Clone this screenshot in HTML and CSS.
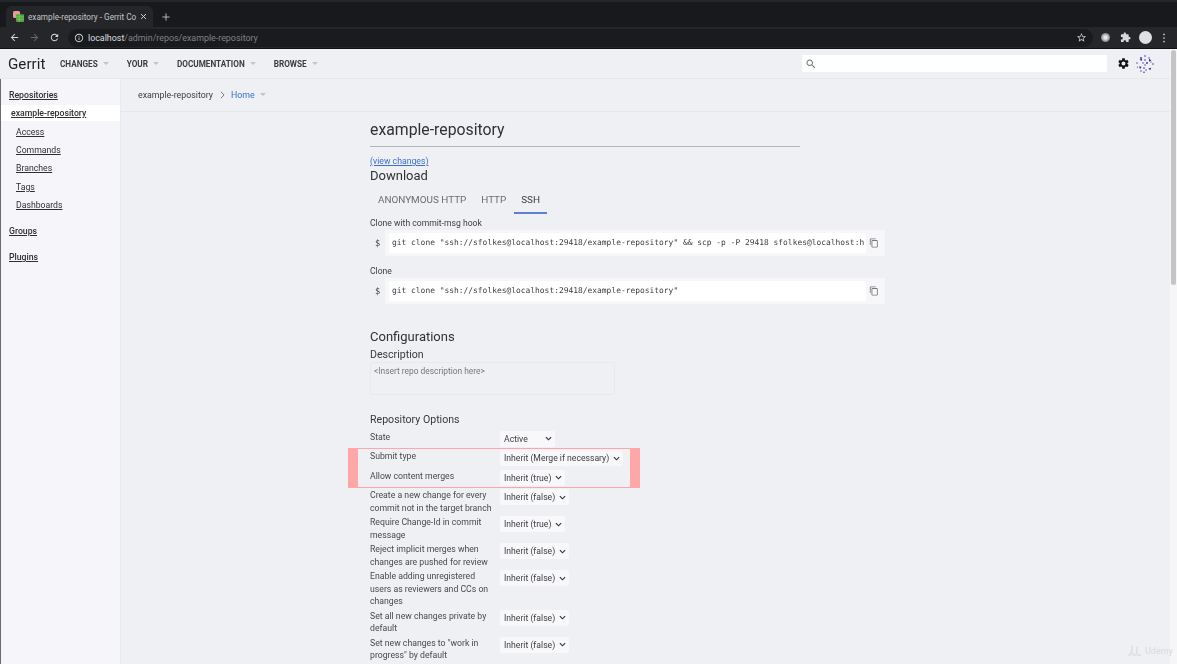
FILE: index.html
```html
<!DOCTYPE html>
<html lang="en">
<head>
  <meta charset="UTF-8">
  <title>example-repository - Gerrit Code Review</title>
  <link rel="stylesheet" href="styles.css">
</head>
<body>

  <div class="tabbar">
    <div class="tab">
      <svg class="favicon" viewBox="0 0 14 14"><rect x="0" y="0" width="9" height="9" rx="2" fill="#e89a9a"/><rect x="4" y="4" width="10" height="10" rx="1" fill="#4fa638"/><path d="M4 7.5h10M4 10.5h10M8 4v10" stroke="#94cf78" stroke-width=".7"/></svg>
      <span class="tab-title">example-repository - Gerrit Co</span>
      <svg class="tab-close" viewBox="0 0 10 10"><path d="M1.5 1.5l7 7M8.5 1.5l-7 7" stroke="#d5d6d8" stroke-width="1.4"/></svg>
    </div>
    <svg class="tab-new" viewBox="0 0 10 10"><path d="M5 .5v9M.5 5h9" stroke="#b9babc" stroke-width="1.2"/></svg>
  </div>

  <div class="toolbar">
    <svg class="tool-icon" viewBox="0 0 24 24"><path fill="#d7d8da" d="M20 11H7.83l5.59-5.59L12 4l-8 8 8 8 1.41-1.41L7.83 13H20v-2z"/></svg>
    <svg class="tool-icon" viewBox="0 0 24 24"><path fill="#68696c" d="M12 4l-1.41 1.41L16.17 11H4v2h12.17l-5.58 5.59L12 20l8-8z"/></svg>
    <svg class="tool-icon" viewBox="0 0 24 24"><path fill="#d7d8da" d="M17.65 6.35C16.2 4.9 14.21 4 12 4c-4.42 0-7.99 3.58-7.99 8s3.57 8 7.99 8c3.73 0 6.84-2.55 7.73-6h-2.08c-.82 2.33-3.04 4-5.65 4-3.31 0-6-2.69-6-6s2.69-6 6-6c1.66 0 3.14.69 4.22 1.78L13 11h7V4l-2.35 2.35z"/></svg>
    <div class="omnibox">
      <svg class="omni-info" viewBox="0 0 24 24"><path fill="#d7d8da" d="M11 7h2v2h-2zm0 4h2v6h-2zm1-9C6.48 2 2 6.48 2 12s4.48 10 10 10 10-4.48 10-10S17.52 2 12 2zm0 18c-4.41 0-8-3.59-8-8s3.59-8 8-8 8 3.59 8 8-3.59 8-8 8z"/></svg>
      <span class="omni-host">localhost</span><span class="omni-path">/admin/repos/example-repository</span>
      <svg class="omni-star" viewBox="0 0 24 24"><path fill="#c9cacc" d="M22 9.24l-7.19-.62L12 2 9.19 8.63 2 9.24l5.46 4.73L5.82 21 12 17.27 18.18 21l-1.63-7.03L22 9.24zM12 15.4l-3.76 2.27 1-4.28-3.32-2.88 4.38-.38L12 6.1l1.71 4.04 4.38.38-3.32 2.88 1 4.28L12 15.4z"/></svg>
    </div>
    <div class="tool-right">
      <span class="ext-dot"></span>
      <svg class="ext-icon" viewBox="0 0 24 24"><path fill="#d7d8da" d="M20.5 11H19V7c0-1.1-.9-2-2-2h-4V3.5C13 2.12 11.88 1 10.5 1S8 2.12 8 3.5V5H4c-1.1 0-1.99.9-1.99 2v3.8H3.5c1.49 0 2.7 1.21 2.7 2.7s-1.21 2.7-2.7 2.7H2V20c0 1.1.9 2 2 2h3.8v-1.5c0-1.49 1.21-2.7 2.7-2.7 1.49 0 2.7 1.21 2.7 2.7V22H17c1.1 0 2-.9 2-2v-4h1.5c1.38 0 2.5-1.12 2.5-2.5S21.88 11 20.5 11z"/></svg>
      <span class="profile"></span>
      <svg class="kebab" viewBox="0 0 4 14"><circle cx="2" cy="2" r="1.2" fill="#c9cacc"/><circle cx="2" cy="7" r="1.2" fill="#c9cacc"/><circle cx="2" cy="12" r="1.2" fill="#c9cacc"/></svg>
    </div>
  </div>

  <div class="window">
    <div class="app">
      <header class="header">
        <span class="logo">Gerrit</span>
        <nav class="nav">
          <a class="nav-item">CHANGES<i class="caret"></i></a>
          <a class="nav-item">YOUR<i class="caret"></i></a>
          <a class="nav-item">DOCUMENTATION<i class="caret"></i></a>
          <a class="nav-item">BROWSE<i class="caret"></i></a>
        </nav>
        <div class="search">
          <svg class="search-icon" viewBox="0 0 24 24"><path fill="#6f7073" d="M15.5 14h-.79l-.28-.27C15.41 12.59 16 11.11 16 9.5 16 5.91 13.09 3 9.5 3S3 5.91 3 9.5 5.91 16 9.5 16c1.61 0 3.09-.59 4.23-1.57l.27.28v.79l5 4.99L20.49 19l-4.99-5zm-6 0C7.01 14 5 11.99 5 9.5S7.01 5 9.5 5 14 7.01 14 9.5 11.99 14 9.5 14z"/></svg>
        </div>
        <svg class="gear" viewBox="0 0 24 24"><path fill="#111" d="M19.14 12.94c.04-.3.06-.61.06-.94 0-.32-.02-.64-.07-.94l2.03-1.58c.18-.14.23-.41.12-.61l-1.92-3.32c-.12-.22-.37-.29-.59-.22l-2.39.96c-.5-.38-1.03-.7-1.62-.94l-.36-2.54c-.04-.24-.24-.41-.48-.41h-3.84c-.24 0-.43.17-.47.41l-.36 2.54c-.59.24-1.13.57-1.62.94l-2.39-.96c-.22-.08-.47 0-.59.22L2.74 8.87c-.12.21-.08.47.12.61l2.03 1.58c-.05.3-.09.63-.09.94s.02.64.07.94l-2.03 1.58c-.18.14-.23.41-.12.61l1.92 3.32c.12.22.37.29.59.22l2.39-.96c.5.38 1.03.7 1.62.94l.36 2.54c.05.24.24.41.48.41h3.84c.24 0 .44-.17.47-.41l.36-2.54c.59-.24 1.13-.56 1.62-.94l2.39.96c.22.08.47 0 .59-.22l1.92-3.32c.12-.22.07-.47-.12-.61l-2.01-1.58zM12 15.6c-1.98 0-3.6-1.62-3.6-3.6s1.62-3.6 3.6-3.6 3.6 1.62 3.6 3.6-1.62 3.6-3.6 3.6z"/></svg>
        <svg class="user-logo" viewBox="0 0 18 18" fill="#3d2aa8">
          <circle cx="9" cy="1" r=".8"/><circle cx="5" cy="3" r=".9"/><circle cx="13" cy="3" r=".7"/><path d="M3.5 4.5l2.8-.8-.6 2.4zM13 3.8l2.4 1.6-2.4 1.4z"/><circle cx="9" cy="5" r=".8"/><circle cx="1" cy="8" r=".7"/><circle cx="7" cy="8" r=".7"/><circle cx="11" cy="8" r=".9"/><circle cx="17" cy="9" r=".8"/><circle cx="9" cy="10" r=".7"/><path d="M3 11.5l2.8.3-1.8 2.3zM12.3 13.6l2.9-.9-.9 2.5z"/><circle cx="1.5" cy="12" r=".6"/><circle cx="8" cy="13" r=".8"/><circle cx="10" cy="15" r=".7"/><circle cx="5" cy="16" r=".7"/><circle cx="8" cy="17.2" r=".8"/><circle cx="15" cy="7" r=".6"/>
        </svg>
      </header>

      <div class="body-row">
        <aside class="sidebar">
          <a class="side-head first">Repositories</a>
          <a class="side-active">example-repository</a>
          <a class="side-sub">Access</a>
          <a class="side-sub">Commands</a>
          <a class="side-sub">Branches</a>
          <a class="side-sub">Tags</a>
          <a class="side-sub">Dashboards</a>
          <a class="side-head group">Groups</a>
          <a class="side-head group">Plugins</a>
        </aside>

        <main class="main">
          <div class="crumbs">
            <span>example-repository</span>
            <svg class="crumb-arrow" viewBox="0 0 6 10"><path d="M1 1l4 4-4 4" fill="none" stroke="#66676a" stroke-width="1.1"/></svg>
            <a class="crumb-link">Home</a><i class="caret"></i>
          </div>

          <section class="content">
            <h1 class="repo-title">example-repository</h1>
            <a class="view-changes">(view changes)</a>
            <h2 class="section-title download">Download</h2>

            <div class="tabs">
              <span class="dl-tab">ANONYMOUS HTTP</span>
              <span class="dl-tab">HTTP</span>
              <span class="dl-tab selected">SSH</span>
            </div>

            <div class="cmd-label">Clone with commit-msg hook</div>
            <div class="cmd">
              <span class="dollar">$</span>
              <div class="cmd-box">
                <div class="cmd-text">git clone "ssh://sfolkes@localhost:29418/example-repository" &amp;&amp; scp -p -P 29418 sfolkes@localhost:h</div>
                <svg class="copy" viewBox="0 0 24 24"><path fill="#77787b" d="M16 1H4c-1.1 0-2 .9-2 2v14h2V3h12V1zm3 4H8c-1.1 0-2 .9-2 2v14c0 1.1.9 2 2 2h11c1.1 0 2-.9 2-2V7c0-1.1-.9-2-2-2zm0 16H8V7h11v14z"/></svg>
              </div>
            </div>

            <div class="cmd-label second">Clone</div>
            <div class="cmd">
              <span class="dollar">$</span>
              <div class="cmd-box">
                <div class="cmd-text">git clone "ssh://sfolkes@localhost:29418/example-repository"</div>
                <svg class="copy" viewBox="0 0 24 24"><path fill="#77787b" d="M16 1H4c-1.1 0-2 .9-2 2v14h2V3h12V1zm3 4H8c-1.1 0-2 .9-2 2v14c0 1.1.9 2 2 2h11c1.1 0 2-.9 2-2V7c0-1.1-.9-2-2-2zm0 16H8V7h11v14z"/></svg>
              </div>
            </div>

            <h2 class="section-title configurations">Configurations</h2>
            <h3 class="sub-title">Description</h3>
            <div class="description">&lt;Insert repo description here&gt;</div>

            <h3 class="sub-title options">Repository Options</h3>

            <div class="opt">
              <label class="opt-label">State</label>
              <select class="opt-select wide-active"><option>Active</option></select>
            </div>
            <div class="highlight">
              <div class="opt">
                <label class="opt-label">Submit type</label>
                <select class="opt-select"><option>Inherit (Merge if necessary)</option></select>
              </div>
              <div class="opt">
                <label class="opt-label">Allow content merges</label>
                <select class="opt-select"><option>Inherit (true)</option></select>
              </div>
            </div>
            <div class="opt">
              <label class="opt-label">Create a new change for every commit not in the target branch</label>
              <select class="opt-select"><option>Inherit (false)</option></select>
            </div>
            <div class="opt">
              <label class="opt-label">Require Change-Id in commit message</label>
              <select class="opt-select"><option>Inherit (true)</option></select>
            </div>
            <div class="opt">
              <label class="opt-label">Reject implicit merges when changes are pushed for review</label>
              <select class="opt-select"><option>Inherit (false)</option></select>
            </div>
            <div class="opt">
              <label class="opt-label">Enable adding unregistered users as reviewers and CCs on changes</label>
              <select class="opt-select"><option>Inherit (false)</option></select>
            </div>
            <div class="opt">
              <label class="opt-label">Set all new changes private by default</label>
              <select class="opt-select"><option>Inherit (false)</option></select>
            </div>
            <div class="opt">
              <label class="opt-label">Set new changes to "work in progress" by default</label>
              <select class="opt-select"><option>Inherit (false)</option></select>
            </div>
          </section>
        </main>
      </div>
    </div>

    <div class="scrollbar"><div class="scroll-thumb"></div></div>
    <div class="watermark">
      <svg class="wm-logo" viewBox="0 0 20 16"><path d="M2 15c3-1 5-5 5-13M7 11c0 3 3 4 5 2M13 4v7c0 3 3 4 5 3" fill="none" stroke="#dfe0e4" stroke-width="2.4" stroke-linecap="round"/></svg>
      <span>Udemy</span>
    </div>
  </div>

</body>
</html>
```

FILE: styles.css
```css
html, body {
  height: 100%;
}

body {
  margin: 0;
  overflow: hidden;
  display: flex;
  flex-direction: column;
  font-family: Roboto, "Liberation Sans", sans-serif;
  font-size: 9.6px;
  color: #3c3d40;
  background-color: #eff0f4;
  filter: blur(0.5px);
}

/* browser chrome */

.tabbar {
  height: 27px;
  flex: none;
  display: flex;
  align-items: flex-end;
  background-color: #18191c;
  border-top: 2px solid #23272c;
  box-sizing: border-box;
  padding-left: 6px;
}

.tab {
  width: 147px;
  height: 21px;
  display: flex;
  align-items: center;
  padding: 0 6px 0 7px;
  box-sizing: border-box;
  background-color: #25262a;
  border-radius: 6px 6px 0 0;
}

.favicon {
  width: 11px;
  height: 11px;
  margin-right: 4px;
}

.tab-title {
  flex: 1;
  overflow: hidden;
  white-space: nowrap;
  font-size: 8.2px;
  color: #c4c5c7;
}

.tab-close {
  width: 7px;
  height: 7px;
  margin-left: 3px;
}

.tab-new {
  width: 8px;
  height: 8px;
  margin: 0 0 6px 9px;
}

.toolbar {
  height: 22px;
  flex: none;
  display: flex;
  align-items: center;
  padding-left: 9px;
  box-sizing: border-box;
  background-color: #25262a;
  border-bottom: 1px solid #101114;
}

.tool-icon {
  width: 11px;
  height: 11px;
  margin-right: 9px;
}

.omnibox {
  width: 1025px;
  height: 18px;
  margin-left: -1px;
  display: flex;
  align-items: center;
  padding: 0 6px;
  box-sizing: border-box;
  border-radius: 9px;
  background-color: #1a1b1e;
  font-size: 8.9px;
}

.omni-info {
  width: 10px;
  height: 10px;
  margin-right: 4px;
}

.omni-host {
  color: #dcdde0;
}

.omni-path {
  color: #808185;
}

.omni-star {
  width: 11px;
  height: 11px;
  margin-left: auto;
}

.tool-right {
  flex: 1;
  display: flex;
  align-items: center;
  padding-left: 8px;
}

.ext-dot {
  width: 9px;
  height: 9px;
  border-radius: 50%;
  background: radial-gradient(circle, #e8e8e8 20%, #77787b 75%);
}

.ext-icon {
  width: 11px;
  height: 11px;
  margin-left: 10px;
}

.profile {
  width: 13px;
  height: 13px;
  margin-left: 8px;
  border-radius: 50%;
  background-color: #dfe0e2;
}

.kebab {
  width: 4px;
  height: 10px;
  margin-left: 10px;
}

/* gerrit app */

.window {
  flex: 1;
  min-height: 0;
  display: flex;
  position: relative;
}

.app {
  flex: 1;
  min-width: 0;
  display: flex;
  flex-direction: column;
}

.header {
  height: 29px;
  flex: none;
  display: flex;
  align-items: center;
  padding-left: 8px;
  border-bottom: 1px solid #e6e7eb;
}

.logo {
  width: 52px;
  font-size: 15.2px;
  color: #1f2023;
}

.nav {
  display: flex;
  flex: 1;
}

.nav-item {
  display: flex;
  align-items: center;
  margin-right: 18px;
  font-size: 8.2px;
  font-weight: 700;
  color: #3a3b3e;
}

.caret {
  width: 0;
  height: 0;
  margin-left: 5px;
  border-left: 3px solid transparent;
  border-right: 3px solid transparent;
  border-top: 3px solid #c2c3c6;
}

.search {
  width: 305px;
  height: 17px;
  display: flex;
  align-items: center;
  padding-left: 3px;
  box-sizing: border-box;
  border-radius: 1px;
  background-color: #fff;
}

.search-icon {
  width: 12px;
  height: 12px;
}

.gear {
  width: 13px;
  height: 13px;
  margin-left: 9.5px;
}

.user-logo {
  width: 18px;
  height: 18px;
  margin: 0 16px 0 6.5px;
}

.body-row {
  flex: 1;
  min-height: 0;
  display: flex;
}

.sidebar {
  width: 121px;
  flex: none;
  padding-top: 10px;
  box-sizing: border-box;
  background-color: #f6f6fa;
  border-left: 1px solid #6a6b6f;
  border-right: 1px solid #e9eaee;
}

.sidebar a {
  display: block;
  color: #2e2f32;
  text-decoration: underline;
  line-height: 18.4px;
  font-size: 8.7px;
}

.side-head {
  padding-left: 8px;
  font-weight: 500;
}

.side-head.first {
  line-height: 13px !important;
  margin-bottom: 3px;
}

.side-head.group {
  margin-top: 7.6px;
}

.side-active {
  padding-left: 10px;
  font-weight: 500;
  line-height: 16px !important;
  margin-bottom: 1.5px;
  background-color: #fff;
}

.side-sub {
  padding-left: 15px;
}

.main {
  flex: 1;
  min-width: 0;
}

.crumbs {
  height: 33px;
  display: flex;
  align-items: center;
  padding: 0 0 1px 17px;
  box-sizing: border-box;
  border-bottom: 1px solid #e6e7eb;
  font-size: 8.8px;
}

.crumb-arrow {
  width: 5px;
  height: 8px;
  margin: 0 6px 0 7px;
}

.crumb-link {
  color: #3b6fc9;
}

.content {
  padding: 8px 0 0 249px;
}

.repo-title {
  width: 430px;
  margin: 0;
  padding-bottom: 7px;
  font-size: 15.8px;
  font-weight: 400;
  line-height: 19px;
  color: #303134;
  border-bottom: 1px solid #b4b5b8;
}

.view-changes {
  display: block;
  margin-top: 9px;
  font-size: 8.7px;
  line-height: 10px;
  color: #3b6fc9;
  text-decoration: underline;
}

.section-title {
  margin: 0;
  font-size: 13px;
  font-weight: 400;
  line-height: 16px;
  color: #303134;
}

.section-title.download {
  margin-top: 2px;
}

.tabs {
  display: flex;
  margin-top: 7px;
  margin-left: 1px;
}

.dl-tab {
  height: 23px;
  padding: 4px 7px 0;
  margin-right: 1px;
  box-sizing: border-box;
  font-size: 9.9px;
  line-height: 10px;
  color: #6a6b6e;
}

.dl-tab.selected {
  color: #3c3d40;
  border-bottom: 2px solid #5b82d6;
}

.cmd-label {
  margin-top: 4px;
  font-size: 8.6px;
  line-height: 11px;
}

.cmd-label.second {
  margin-top: 9.5px;
}

.cmd {
  width: 515px;
  height: 26px;
  margin-top: 1px;
  display: flex;
  align-items: center;
}

.dollar {
  width: 15px;
  flex: none;
  padding-left: 5px;
  box-sizing: border-box;
  font-family: "DejaVu Sans Mono", monospace;
  font-size: 8.6px;
}

.cmd-box {
  flex: 1;
  min-width: 0;
  height: 26px;
  display: flex;
  align-items: center;
  background-color: #f7f7fa;
}

.cmd-text {
  width: 477px;
  height: 20px;
  margin-left: 4px;
  padding-left: 3px;
  box-sizing: border-box;
  overflow: hidden;
  white-space: nowrap;
  font-family: "DejaVu Sans Mono", monospace;
  font-size: 7.93px;
  line-height: 20px;
  color: #3a3b3e;
  background-color: #fff;
}

.copy {
  width: 10px;
  height: 10px;
  margin-left: 3px;
}

.section-title.configurations {
  margin-top: 25.5px;
}

.sub-title {
  margin: 3px 0 0;
  font-size: 10.6px;
  font-weight: 400;
  line-height: 14px;
  color: #38393c;
}

.description {
  width: 245px;
  height: 33px;
  padding: 3px;
  box-sizing: border-box;
  font-size: 8.4px;
  line-height: 11px;
  color: #77787b;
  border: 1px solid #e8e9ed;
  border-radius: 2px;
}

.sub-title.options {
  margin-top: 18px;
  margin-bottom: 3.5px;
}

.opt {
  min-height: 19.6px;
  display: flex;
  align-items: flex-start;
  padding-bottom: 2.4px;
  box-sizing: border-box;
}

.opt-label {
  width: 130px;
  flex: none;
  padding-right: 6px;
  box-sizing: border-box;
  font-size: 8.7px;
  line-height: 12.3px;
  color: #48494c;
}

.opt-select {
  appearance: none;
  height: 16px;
  margin: 0;
  padding: 0 13px 0 4px;
  border: 0;
  border-radius: 2px;
  background: #f8f8fb url("data:image/svg+xml,%3Csvg xmlns='http://www.w3.org/2000/svg' viewBox='0 0 8 5'%3E%3Cpath d='M1 1l3 3 3-3' fill='none' stroke='%23333' stroke-width='1.3'/%3E%3C/svg%3E") no-repeat right 3px center / 7px 5px;
  font-family: Roboto, "Liberation Sans", sans-serif;
  font-size: 8.65px;
  color: #3c3d40;
}

.wide-active {
  width: 55px;
}

.highlight {
  position: relative;
}

.highlight::before {
  content: "";
  position: absolute;
  left: -22px;
  top: -2.5px;
  width: 292px;
  height: 40px;
  box-sizing: border-box;
  border: solid #ffa6a9;
  border-width: 1.5px 10px;
  pointer-events: none;
}

.scrollbar {
  width: 7px;
  flex: none;
  padding: 1px 1px 0;
  box-sizing: border-box;
  background-color: #f6f6f8;
}

.scroll-thumb {
  height: 235px;
  border-radius: 3px;
  background-color: #c3c4c6;
}

.watermark {
  position: absolute;
  right: 4px;
  bottom: 7px;
  display: flex;
  align-items: center;
  font-size: 9px;
  font-weight: 500;
  color: #dcdde1;
}

.wm-logo {
  width: 15px;
  height: 13px;
  margin-right: 3px;
}
```
